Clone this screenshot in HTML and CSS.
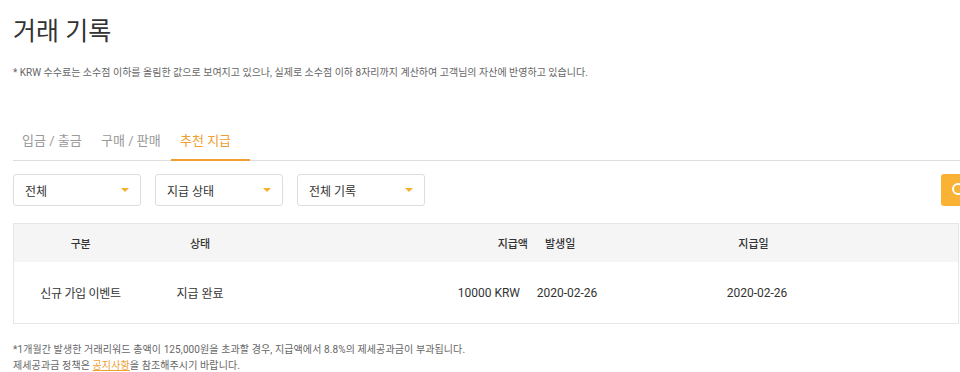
FILE: index.html
```html
<!DOCTYPE html>
<html lang="ko">
<head>
<meta charset="utf-8">
<link rel="stylesheet" href="styles.css">
</head>
<body>
<div class="page">
  <h1 class="title">거래 기록</h1>
  <p class="notice">* KRW 수수료는 소수점 이하를 올림한 값으로 보여지고 있으나, 실제로 소수점 이하 8자리까지 계산하여 고객님의 자산에 반영하고 있습니다.</p>

  <div class="tabs">
    <div class="tab">입금 / 출금</div>
    <div class="tab">구매 / 판매</div>
    <div class="tab active">추천 지급</div>
  </div>

  <div class="filters">
    <div class="select"><span>전체</span><i class="caret"></i></div>
    <div class="select"><span>지급 상태</span><i class="caret"></i></div>
    <div class="select"><span>전체 기록</span><i class="caret"></i></div>
    <div class="spacer"></div>
    <button class="search-btn" aria-label="검색">
      <svg width="16" height="16" viewBox="0 0 16 16"><circle cx="7" cy="7" r="5" fill="none" stroke="#fff" stroke-width="2"/><path d="M11 11l4 4" stroke="#fff" stroke-width="2" stroke-linecap="round"/></svg>
    </button>
  </div>

  <div class="table">
    <div class="row head">
      <div class="c c1">구분</div>
      <div class="c c2">상태</div>
      <div class="c c3">지급액</div>
      <div class="c c4">발생일</div>
      <div class="c c5">지급일</div>
      <div class="c c6"></div>
    </div>
    <div class="row body">
      <div class="c c1">신규 가입 이벤트</div>
      <div class="c c2">지급 완료</div>
      <div class="c c3 amt">10000 KRW</div>
      <div class="c c4">2020-02-26</div>
      <div class="c c5">2020-02-26</div>
      <div class="c c6"></div>
    </div>
  </div>

  <div class="footnote">
    <p>*1개월간 발생한 거래리워드 총액이 125,000원을 초과할 경우, 지급액에서 8.8%의 제세공과금이 부과됩니다.</p>
    <p>제세공과금 정책은 <a href="#" class="link">공지사항</a>을 참조해주시기 바랍니다.</p>
  </div>
</div>
</body>
</html>
```

FILE: styles.css
```css
* { box-sizing: border-box; }
html, body { margin: 0; padding: 0; background: #fff; overflow: hidden; }
body {
  font-family: Roboto, "Noto Sans CJK KR", "Noto Sans", sans-serif;
  color: #333;
}
.page {
  padding-left: 13px;
  width: 1000px;
}
.title {
  margin: 15px 0 0;
  font-size: 25px;
  font-weight: 400;
  line-height: 34px;
  color: #333;
}
.notice {
  margin: 17px 0 0;
  font-size: 10px;
  line-height: 14px;
  color: #666;
}
.tabs {
  display: flex;
  margin-top: 48px;
  width: 947px;
  border-bottom: 1px solid #ddd;
}
.tab {
  width: 79px;
  padding: 0 0 0 9px;
  height: 33px;
  line-height: 26px;
  font-size: 13px;
  color: #999;
  margin-bottom: -1px;
  border-bottom: 2px solid transparent;
  white-space: nowrap;
}
.tab.active {
  color: #f0a030;
  border-bottom-color: #f0a030;
}
.filters {
  display: flex;
  gap: 14px;
  margin-top: 13px;
  align-items: center;
}
.select {
  width: 128px;
  height: 32px;
  border: 1px solid #ddd;
  border-radius: 3px;
  display: flex;
  align-items: center;
  justify-content: space-between;
  padding: 0 11px 0 11px;
  font-size: 12px;
  color: #333;
  background: #fff;
}
.caret {
  width: 0;
  height: 0;
  border-left: 4px solid transparent;
  border-right: 4px solid transparent;
  border-top: 4px solid #f5b031;
}
.spacer { width: 488px; flex: none; }
.search-btn {
  width: 36px;
  height: 32px;
  border: 0;
  border-radius: 3px;
  background: #f9b233;
  display: flex;
  align-items: center;
  justify-content: center;
  padding: 0;
}
.table {
  margin-top: 17px;
  width: 946px;
  border: 1px solid #e6e6e6;
}
.row {
  display: grid;
  grid-template-columns: 133px 106px 283px 62px 318px 1fr;
  align-items: center;
}
.row.head {
  height: 38px;
  background: #f5f5f5;
  font-size: 11px;
  font-weight: 500;
  color: #333;
}
.row.body {
  height: 61px;
  background: #fff;
  font-size: 12px;
  color: #333;
}
.c { text-align: center; white-space: nowrap; }
.c1 { letter-spacing: -0.3px; }
.c3 { text-align: right; padding-right: 8px; }
.c3.amt { padding-right: 16px; letter-spacing: 0; }
.head .c4 { text-align: left; padding-left: 9px; }
.head .c5 { padding-right: 7px; }
.footnote {
  margin-top: 18px;
  font-size: 10px;
  line-height: 16px;
  color: #666;
  letter-spacing: 0.1px;
}
.footnote p { margin: 0; }
.link { color: #f0a030; text-decoration: underline; }
```
